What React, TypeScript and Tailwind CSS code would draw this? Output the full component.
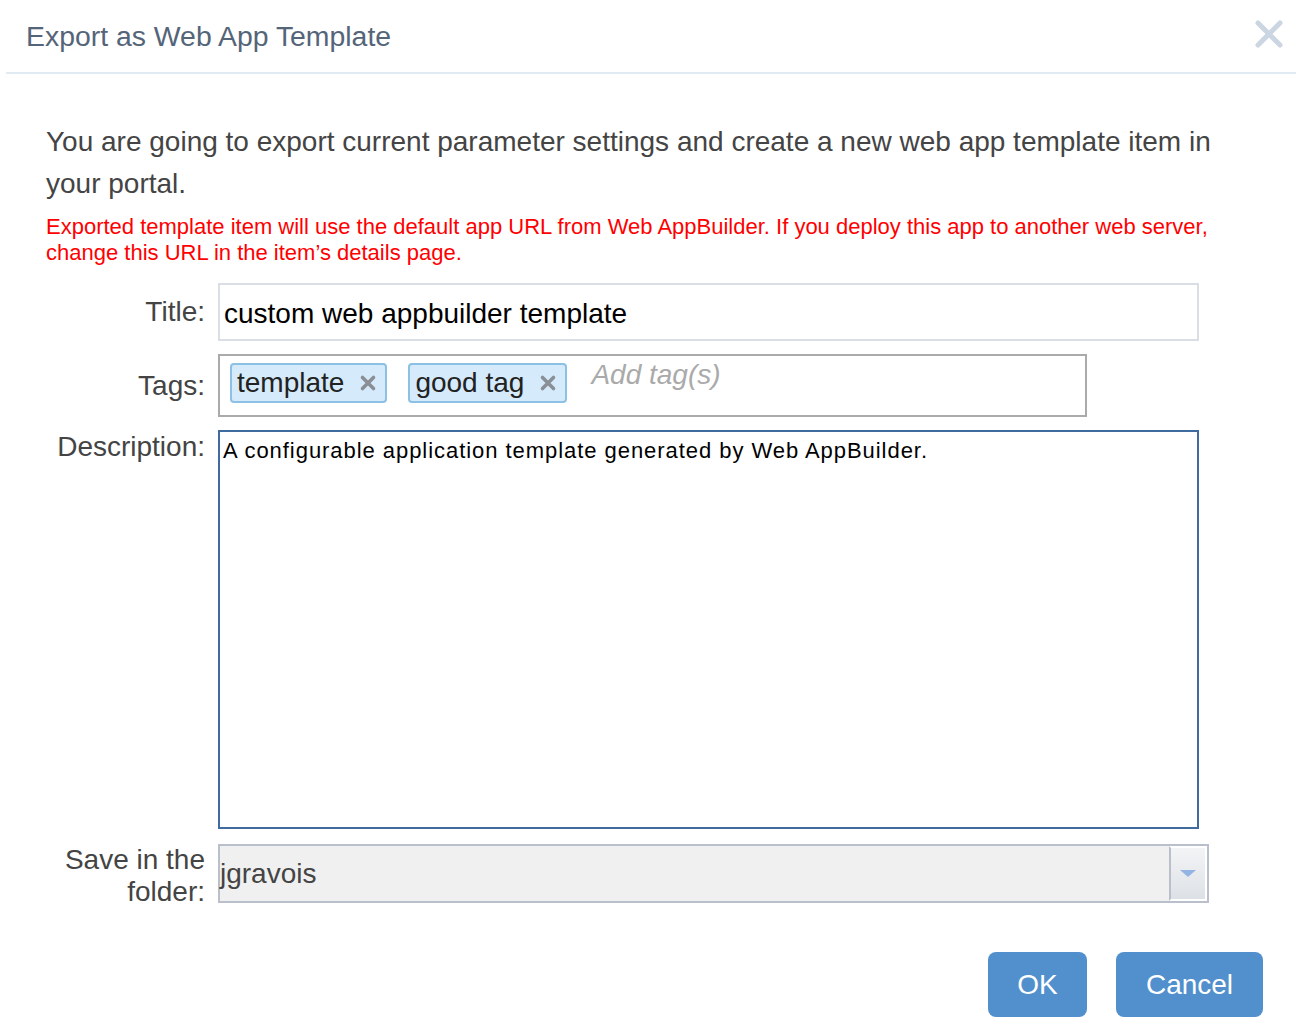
import React from 'react';

const Tag: React.FC<{ label: string }> = ({ label }) => (
    <span className="flex h-[40px] items-center gap-[15px] rounded-[4px] border-2 border-[#8cc0e4] bg-[#d5eafa] pl-[5px] pr-[8px] text-[28px] leading-none text-[#222]">
        {label}
        <svg width="18" height="18" viewBox="0 0 18 18" className="text-[#8a8f96]">
            <path d="M3.5 3.5 L14.5 14.5 M14.5 3.5 L3.5 14.5" stroke="currentColor" strokeWidth="3.6" strokeLinecap="round" />
        </svg>
    </span>
);

export default function App() {
    return (
        <div className="h-[1036px] w-[1296px] bg-white font-['Liberation_Sans',Arial,sans-serif]">
            <div className="ml-[6px] flex h-[74px] items-center justify-between border-b-2 border-[#e1ebf3] pl-[20px] pr-[12px]">
                <h1 className="text-[28.4px] text-[#556579]">Export as Web App Template</h1>
                <svg width="30" height="30" viewBox="0 0 30 30" className="mb-[4px] text-[#cbd6e2]">
                    <path d="M4 4 L26 26 M26 4 L4 26" stroke="currentColor" strokeWidth="5" strokeLinecap="round" />
                </svg>
            </div>

            <div className="px-[46px] pt-[47px]">
                <p className="text-[28px] leading-[42px] text-[#444]">
                    You are going to export current parameter settings and create a new web app template item in your portal.
                </p>
                <p className="mt-[9px] text-[22px] leading-[26px] text-[#ff0000]">
                    Exported template item will use the default app URL from Web AppBuilder. If you deploy this app to another web server, change this URL in the item’s details page.
                </p>

                <div className="mt-[17px] grid grid-cols-[159px_1fr] gap-x-[13px] text-[28px] text-[#444]">
                    <label className="flex h-[58px] items-center justify-end">Title:</label>
                    <div className="flex h-[58px] w-[981px] items-center border-2 border-[#dadfe5] px-[4px] pt-[3px] text-[28px] text-black">
                        custom web appbuilder template
                    </div>

                    <label className="mt-[13px] flex h-[63px] items-center justify-end">Tags:</label>
                    <div className="mt-[13px] flex h-[63px] w-[869px] items-start gap-[21px] border-2 border-[#aaaaaa] px-[10px] pt-[7px]">
                        <Tag label="template" />
                        <Tag label="good tag" />
                        <span className="ml-[3px] mt-[-8px] text-[28px] italic leading-[40px] text-[#aaa]">Add tag(s)</span>
                    </div>

                    <label className="mt-[13px] flex justify-end pt-[1px] leading-[32px]">Description:</label>
                    <div className="mt-[13px] h-[399px] w-[981px] border-2 border-[#3f6b9f] px-[3px] pt-[5px] text-[22px] leading-[28px] tracking-[0.95px] text-black">
                        A configurable application template generated by Web AppBuilder.
                    </div>

                    <label className="mt-[15px] flex flex-col items-end text-right leading-[32px]">
                        <span>Save in the</span>
                        <span>folder:</span>
                    </label>
                    <div className="mt-[15px] flex h-[59px] w-[991px] border-2 border-[#b9bfcb] bg-[#f0f0f0]">
                        <span className="flex flex-1 items-center text-[28px] text-[#444]">jgravois</span>
                        <div className="flex w-[38px] items-center justify-center border-2 border-white border-l-[#b9bfcb] bg-gradient-to-b from-[#f3f4f6] to-[#dde1e6]">
                            <svg width="16" height="8" viewBox="0 0 16 8">
                                <path d="M0 0 H16 L8 7 Z" fill="#93b4e2" />
                            </svg>
                        </div>
                    </div>
                </div>

                <div className="mt-[44px] flex justify-end gap-[29px]">
                    <button className="h-[65px] w-[99px] rounded-[8px] bg-[#5190cc] text-[28px] text-white">OK</button>
                    <button className="mr-[-13px] h-[65px] w-[147px] rounded-[8px] bg-[#5190cc] text-[28px] text-white">Cancel</button>
                </div>
            </div>
        </div>
    );
}
